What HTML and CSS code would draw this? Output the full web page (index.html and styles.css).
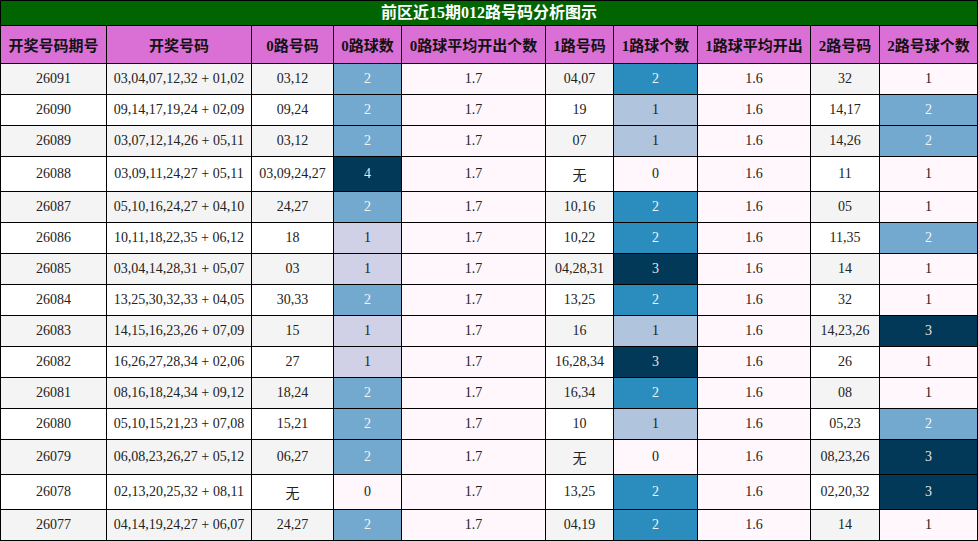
FILE: index.html
```html
<!DOCTYPE html>
<html lang="zh-CN">
<head>
<meta charset="utf-8">
<title>前区近15期012路号码分析图示</title>
<link rel="stylesheet" href="styles.css">
</head>
<body>
<table class="chart">
<colgroup>
<col class="w1"><col class="w2"><col class="w3"><col class="w4"><col class="w5"><col class="w6"><col class="w7"><col class="w8"><col class="w9"><col class="w10">
</colgroup>
<thead>
<tr><th class="title" colspan="10">前区近15期012路号码分析图示</th></tr>
<tr class="head">
<th>开奖号码期号</th><th>开奖号码</th><th>0路号码</th><th>0路球数</th><th>0路球平均开出个数</th><th>1路号码</th><th>1路球个数</th><th>1路球平均开出</th><th>2路号码</th><th>2路号球个数</th>
</tr>
</thead>
<tbody>
<tr class="g"><td>26091</td><td>03,04,07,12,32 + 01,02</td><td>03,12</td><td class="a2">2</td><td class="pk">1.7</td><td>04,07</td><td class="b2">2</td><td class="pk">1.6</td><td>32</td><td class="pk">1</td></tr>
<tr><td>26090</td><td>09,14,17,19,24 + 02,09</td><td>09,24</td><td class="a2">2</td><td class="pk">1.7</td><td>19</td><td class="b1">1</td><td class="pk">1.6</td><td>14,17</td><td class="a2">2</td></tr>
<tr class="g"><td>26089</td><td>03,07,12,14,26 + 05,11</td><td>03,12</td><td class="a2">2</td><td class="pk">1.7</td><td>07</td><td class="b1">1</td><td class="pk">1.6</td><td>14,26</td><td class="a2">2</td></tr>
<tr><td>26088</td><td>03,09,11,24,27 + 05,11</td><td>03,09,24,27</td><td class="dk">4</td><td class="pk">1.7</td><td>无</td><td class="pk">0</td><td class="pk">1.6</td><td>11</td><td class="pk">1</td></tr>
<tr class="g"><td>26087</td><td>05,10,16,24,27 + 04,10</td><td>24,27</td><td class="a2">2</td><td class="pk">1.7</td><td>10,16</td><td class="b2">2</td><td class="pk">1.6</td><td>05</td><td class="pk">1</td></tr>
<tr><td>26086</td><td>10,11,18,22,35 + 06,12</td><td>18</td><td class="a1">1</td><td class="pk">1.7</td><td>10,22</td><td class="b2">2</td><td class="pk">1.6</td><td>11,35</td><td class="a2">2</td></tr>
<tr class="g"><td>26085</td><td>03,04,14,28,31 + 05,07</td><td>03</td><td class="a1">1</td><td class="pk">1.7</td><td>04,28,31</td><td class="dk">3</td><td class="pk">1.6</td><td>14</td><td class="pk">1</td></tr>
<tr><td>26084</td><td>13,25,30,32,33 + 04,05</td><td>30,33</td><td class="a2">2</td><td class="pk">1.7</td><td>13,25</td><td class="b2">2</td><td class="pk">1.6</td><td>32</td><td class="pk">1</td></tr>
<tr class="g"><td>26083</td><td>14,15,16,23,26 + 07,09</td><td>15</td><td class="a1">1</td><td class="pk">1.7</td><td>16</td><td class="b1">1</td><td class="pk">1.6</td><td>14,23,26</td><td class="dk">3</td></tr>
<tr><td>26082</td><td>16,26,27,28,34 + 02,06</td><td>27</td><td class="a1">1</td><td class="pk">1.7</td><td>16,28,34</td><td class="dk">3</td><td class="pk">1.6</td><td>26</td><td class="pk">1</td></tr>
<tr class="g"><td>26081</td><td>08,16,18,24,34 + 09,12</td><td>18,24</td><td class="a2">2</td><td class="pk">1.7</td><td>16,34</td><td class="b2">2</td><td class="pk">1.6</td><td>08</td><td class="pk">1</td></tr>
<tr><td>26080</td><td>05,10,15,21,23 + 07,08</td><td>15,21</td><td class="a2">2</td><td class="pk">1.7</td><td>10</td><td class="b1">1</td><td class="pk">1.6</td><td>05,23</td><td class="a2">2</td></tr>
<tr class="g"><td>26079</td><td>06,08,23,26,27 + 05,12</td><td>06,27</td><td class="a2">2</td><td class="pk">1.7</td><td>无</td><td class="pk">0</td><td class="pk">1.6</td><td>08,23,26</td><td class="dk">3</td></tr>
<tr><td>26078</td><td>02,13,20,25,32 + 08,11</td><td>无</td><td class="pk">0</td><td class="pk">1.7</td><td>13,25</td><td class="b2">2</td><td class="pk">1.6</td><td>02,20,32</td><td class="dk">3</td></tr>
<tr class="g"><td>26077</td><td>04,14,19,24,27 + 06,07</td><td>24,27</td><td class="a2">2</td><td class="pk">1.7</td><td>04,19</td><td class="b2">2</td><td class="pk">1.6</td><td>14</td><td class="pk">1</td></tr>
</tbody>
</table>
</body>
</html>
```
FILE: styles.css
```css
html, body {
  margin: 0;
  padding: 0;
  background: #ffffff;
}
.chart {
  border-collapse: collapse;
  table-layout: fixed;
  width: 977px;
  font-family: "Liberation Serif", "Noto Sans CJK SC", serif;
  font-size: 14px;
  color: #222;
  text-align: center;
}
.w1 { width: 106px; }
.w2 { width: 145px; }
.w3 { width: 82px; }
.w4 { width: 68px; }
.w5 { width: 144px; }
.w6 { width: 68px; }
.w7 { width: 84px; }
.w8 { width: 113px; }
.w9 { width: 69px; }
.w10 { width: 98px; }
.chart th, .chart td {
  border: 1px solid #000;
  padding: 7px 0;
  white-space: nowrap;
}
.chart th.title {
  background: #006400;
  color: #ffffff;
  font-size: 16px;
  font-weight: bold;
  padding: 0;
  height: 24px;
  line-height: 24px;
}
.head th {
  background: #da70d6;
  color: #111;
  font-size: 15px;
  font-weight: bold;
  padding: 8px 0;
}
.g td { background: #f4f4f4; }
.chart td.pk { background: #fff7fb; }
.chart td.a1 { background: #d0d1e6; }
.chart td.a2 { background: #74a9cf; color: #f4f4f4; }
.chart td.b1 { background: #b0c4de; }
.chart td.b2 { background: #2b8cbe; color: #f4f4f4; }
.chart td.dk { background: #023858; color: #e6e6e6; }
```
